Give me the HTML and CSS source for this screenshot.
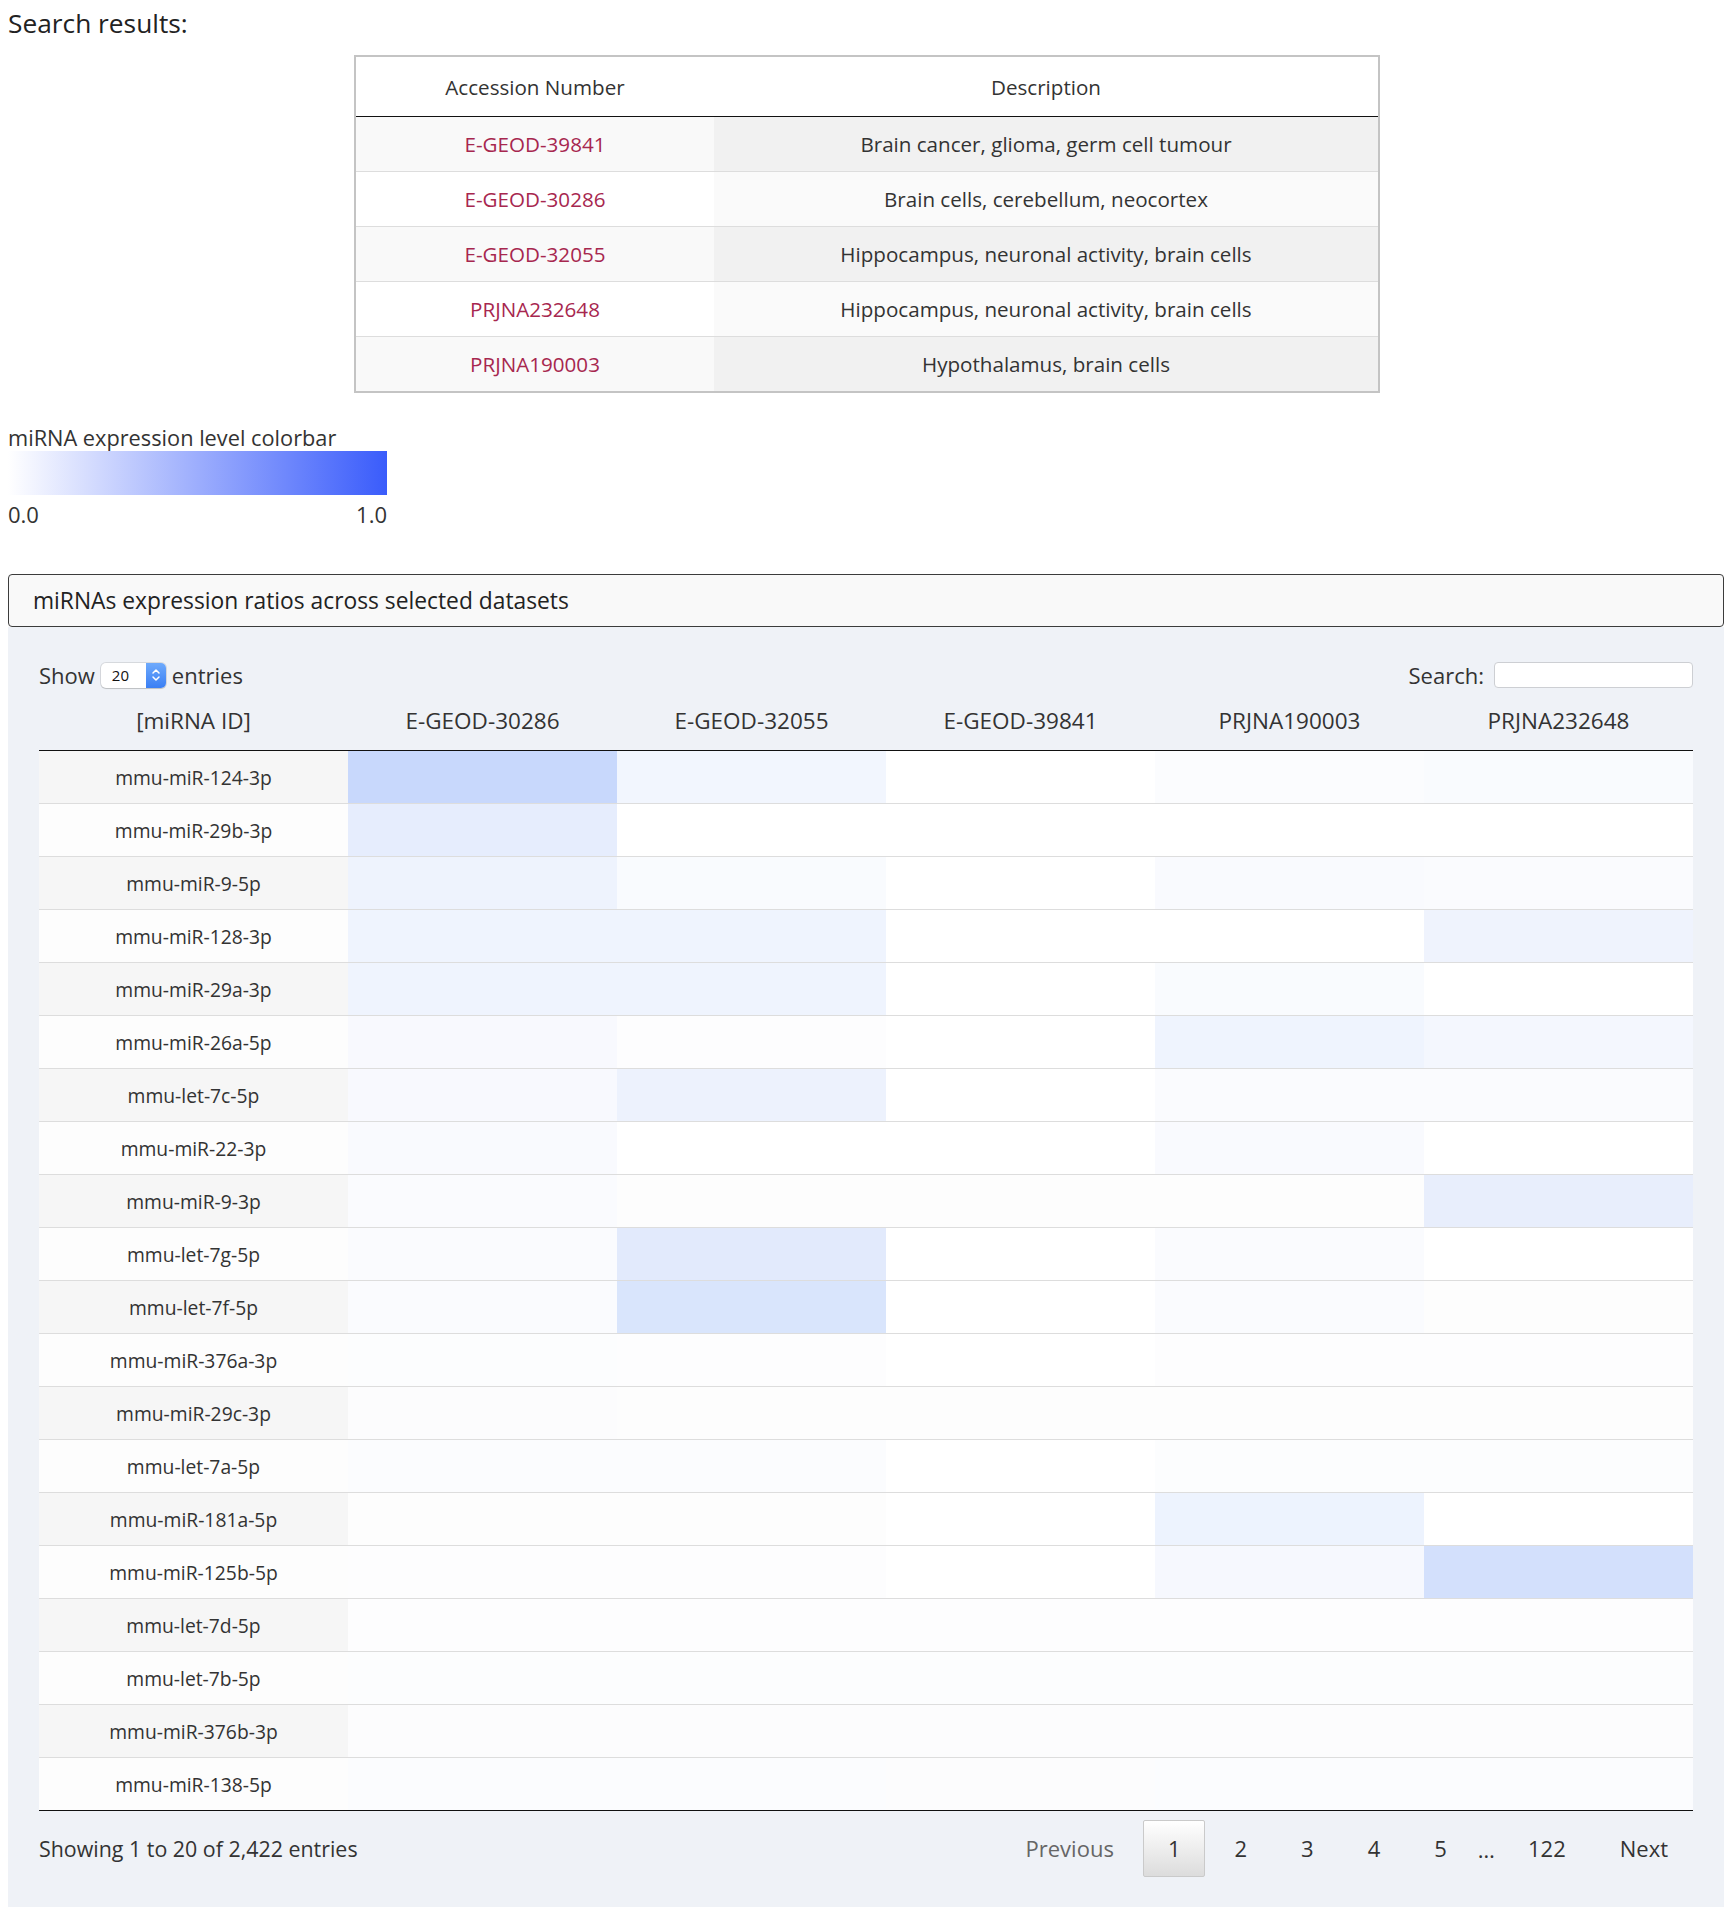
FILE: index.html
```html
<!DOCTYPE html>
<html>
<head>
<meta charset="utf-8">
<title>Search results</title>
<link rel="stylesheet" href="styles.css">
</head>
<body>
<h3 class="page-title">Search results:</h3>

<table class="results">
  <thead>
    <tr><th class="col-acc">Accession Number</th><th>Description</th></tr>
  </thead>
  <tbody>
    <tr class="odd"><td class="acc"><a href="#">E-GEOD-39841</a></td><td class="desc">Brain cancer, glioma, germ cell tumour</td></tr>
    <tr class="even"><td class="acc"><a href="#">E-GEOD-30286</a></td><td class="desc">Brain cells, cerebellum, neocortex</td></tr>
    <tr class="odd"><td class="acc"><a href="#">E-GEOD-32055</a></td><td class="desc">Hippocampus, neuronal activity, brain cells</td></tr>
    <tr class="even"><td class="acc"><a href="#">PRJNA232648</a></td><td class="desc">Hippocampus, neuronal activity, brain cells</td></tr>
    <tr class="odd"><td class="acc"><a href="#">PRJNA190003</a></td><td class="desc">Hypothalamus, brain cells</td></tr>
  </tbody>
</table>

<div class="colorbar">
  <div class="colorbar-label">miRNA expression level colorbar</div>
  <div class="colorbar-bar"></div>
  <div class="colorbar-scale"><span>0.0</span><span>1.0</span></div>
</div>

<section class="panel">
  <div class="panel-heading">miRNAs expression ratios across selected datasets</div>
  <div class="panel-body">
    <div class="dt-top">
      <div class="dt-length">
        <span>Show</span>
        <span class="select"><span class="select-val">20</span><span class="select-arrow"><svg width="10" height="16" viewBox="0 0 10 16"><path d="M2 6 L5 3 L8 6 M2 10 L5 13 L8 10" fill="none" stroke="#fff" stroke-width="1.5" stroke-linecap="round" stroke-linejoin="round"/></svg></span></span>
        <span>entries</span>
      </div>
      <div class="dt-search">
        <span>Search:</span>
        <span class="search-input"></span>
      </div>
    </div>

    <table class="heat">
      <colgroup><col class="c-id"><col><col><col><col><col></colgroup>
      <thead>
        <tr><th>[miRNA ID]</th><th>E-GEOD-30286</th><th>E-GEOD-32055</th><th>E-GEOD-39841</th><th>PRJNA190003</th><th>PRJNA232648</th></tr>
      </thead>
      <tbody>
        <tr class="odd"><td class="id">mmu-miR-124-3p</td><td style="background:#c8d8fc"></td><td style="background:#f2f6fe"></td><td style="background:#ffffff"></td><td style="background:#fbfcfe"></td><td style="background:#f9fbfe"></td></tr>
        <tr class="even"><td class="id">mmu-miR-29b-3p</td><td style="background:#e6edfd"></td><td style="background:#ffffff"></td><td style="background:#ffffff"></td><td style="background:#ffffff"></td><td style="background:#ffffff"></td></tr>
        <tr class="odd"><td class="id">mmu-miR-9-5p</td><td style="background:#eef3fd"></td><td style="background:#f9fbfe"></td><td style="background:#ffffff"></td><td style="background:#f9fafe"></td><td style="background:#fafbfe"></td></tr>
        <tr class="even"><td class="id">mmu-miR-128-3p</td><td style="background:#eff4fe"></td><td style="background:#eff4fe"></td><td style="background:#ffffff"></td><td style="background:#ffffff"></td><td style="background:#eff3fd"></td></tr>
        <tr class="odd"><td class="id">mmu-miR-29a-3p</td><td style="background:#eff4fe"></td><td style="background:#eff4fe"></td><td style="background:#ffffff"></td><td style="background:#f9fbfe"></td><td style="background:#ffffff"></td></tr>
        <tr class="even"><td class="id">mmu-miR-26a-5p</td><td style="background:#f8f9fe"></td><td style="background:#fdfdfe"></td><td style="background:#ffffff"></td><td style="background:#eff4fe"></td><td style="background:#f4f7fe"></td></tr>
        <tr class="odd"><td class="id">mmu-let-7c-5p</td><td style="background:#f8f9fe"></td><td style="background:#edf2fd"></td><td style="background:#ffffff"></td><td style="background:#fafbfe"></td><td style="background:#fafbfe"></td></tr>
        <tr class="even"><td class="id">mmu-miR-22-3p</td><td style="background:#f9fafe"></td><td style="background:#ffffff"></td><td style="background:#ffffff"></td><td style="background:#f9fafe"></td><td style="background:#ffffff"></td></tr>
        <tr class="odd"><td class="id">mmu-miR-9-3p</td><td style="background:#fafbfe"></td><td style="background:#fdfdfd"></td><td style="background:#fdfdfd"></td><td style="background:#fdfdfd"></td><td style="background:#e8eefc"></td></tr>
        <tr class="even"><td class="id">mmu-let-7g-5p</td><td style="background:#fafbfe"></td><td style="background:#e2eafc"></td><td style="background:#ffffff"></td><td style="background:#fafbfe"></td><td style="background:#ffffff"></td></tr>
        <tr class="odd"><td class="id">mmu-let-7f-5p</td><td style="background:#fafbfe"></td><td style="background:#d9e5fc"></td><td style="background:#ffffff"></td><td style="background:#fafbfe"></td><td style="background:#fdfdfd"></td></tr>
        <tr class="even"><td class="id">mmu-miR-376a-3p</td><td style="background:#fcfdfe"></td><td style="background:#fdfdfe"></td><td style="background:#ffffff"></td><td style="background:#fdfdfe"></td><td style="background:#fdfdfe"></td></tr>
        <tr class="odd"><td class="id">mmu-miR-29c-3p</td><td style="background:#fcfcfd"></td><td style="background:#fdfdfd"></td><td style="background:#fdfdfd"></td><td style="background:#fdfdfd"></td><td style="background:#fdfdfd"></td></tr>
        <tr class="even"><td class="id">mmu-let-7a-5p</td><td style="background:#fbfcfe"></td><td style="background:#fbfcfe"></td><td style="background:#ffffff"></td><td style="background:#fcfdfe"></td><td style="background:#fcfdfe"></td></tr>
        <tr class="odd"><td class="id">mmu-miR-181a-5p</td><td style="background:#fdfdfd"></td><td style="background:#fdfdfd"></td><td style="background:#ffffff"></td><td style="background:#edf3fe"></td><td style="background:#ffffff"></td></tr>
        <tr class="even"><td class="id">mmu-miR-125b-5p</td><td style="background:#fdfdfe"></td><td style="background:#fdfdfe"></td><td style="background:#ffffff"></td><td style="background:#f6f8fe"></td><td style="background:#d3e0fc"></td></tr>
        <tr class="odd"><td class="id">mmu-let-7d-5p</td><td style="background:#fdfdfe"></td><td style="background:#fdfdfe"></td><td style="background:#fdfdfe"></td><td style="background:#fdfdfe"></td><td style="background:#fdfdfe"></td></tr>
        <tr class="even"><td class="id">mmu-let-7b-5p</td><td style="background:#fcfdfe"></td><td style="background:#fcfdfe"></td><td style="background:#fcfdfe"></td><td style="background:#fcfdfe"></td><td style="background:#fcfdfe"></td></tr>
        <tr class="odd"><td class="id">mmu-miR-376b-3p</td><td style="background:#fcfcfd"></td><td style="background:#fcfcfd"></td><td style="background:#fcfcfd"></td><td style="background:#fcfcfd"></td><td style="background:#fcfcfd"></td></tr>
        <tr class="even"><td class="id">mmu-miR-138-5p</td><td style="background:#fbfcfe"></td><td style="background:#fbfcfe"></td><td style="background:#fcfcfd"></td><td style="background:#fbfcfe"></td><td style="background:#fbfcfe"></td></tr>
      </tbody>
    </table>

    <div class="dt-bottom">
      <div class="dt-info">Showing 1 to 20 of 2,422 entries</div>
      <div class="pager">
        <span class="pg disabled">Previous</span>
        <span class="pg current">1</span>
        <span class="pg">2</span>
        <span class="pg">3</span>
        <span class="pg">4</span>
        <span class="pg">5</span>
        <span class="ellipsis">…</span>
        <span class="pg">122</span>
        <span class="pg">Next</span>
      </div>
    </div>
  </div>
</section>
</body>
</html>
```

FILE: styles.css
```css
html {
  overflow: hidden;
}

body {
  margin: 8px 8px 0;
  font-family: "Open Sans", "Noto Sans", sans-serif;
  color: #333;
  background: #fff;
}

.page-title {
  margin: 0;
  font-size: 26.3px;
  line-height: 30px;
  font-weight: normal;
  color: #222;
}

/* ---------- search results table ---------- */
.results {
  width: 1026px;
  margin: 17px auto 0;
  border: 2px solid #c4c4c4;
  border-spacing: 0;
  font-size: 20.6px;
  color: #333;
}

.results th {
  font-weight: normal;
  padding: 17px 0 16px;
  line-height: 26px;
  border-bottom: 1px solid #111;
  background: #fff;
}

.results .col-acc {
  width: 358px;
}

.results td {
  padding: 14px 0;
  line-height: 26px;
  text-align: center;
  border-top: 1px solid #ddd;
}

.results tbody tr:first-child td {
  border-top: 0;
}

.results tr.odd td {
  background: #f9f9f9;
}

.results tr.odd td.desc {
  background: #f1f1f1;
}

.results tr.even td {
  background: #fff;
}

.results tr.even td.desc {
  background: #fafafa;
}

.results a {
  color: #a7274f;
  text-decoration: none;
}

/* ---------- colorbar ---------- */
.colorbar {
  margin-top: 31px;
  width: 379px;
}

.colorbar-label {
  font-size: 21.75px;
  line-height: 27px;
}

.colorbar-bar {
  height: 44px;
  background: linear-gradient(to right, #ffffff, #3a5cfb);
}

.colorbar-scale {
  display: flex;
  justify-content: space-between;
  margin-top: 5px;
  font-size: 22px;
  line-height: 28px;
}

/* ---------- panel ---------- */
.panel {
  margin-top: 46px;
  margin-right: 2px;
}

.panel-heading {
  padding: 12px 24px;
  font-size: 22.8px;
  line-height: 27px;
  color: #222;
  background: #f9f9f9;
  border: 1px solid #3c3c3c;
  border-radius: 4px;
}

.panel-body {
  background: #eff2f7;
  padding: 34px 31px 30px;
  font-size: 22px;
}

.dt-top {
  display: flex;
  justify-content: space-between;
  align-items: center;
  height: 28px;
  line-height: 28px;
}

.dt-length {
  display: flex;
  align-items: center;
  gap: 6px;
}

.select {
  display: flex;
  width: 65px;
  height: 25px;
  background: #fff;
  border-radius: 5px;
  box-shadow: 0 0 0 1px rgba(0, 0, 0, 0.1), 0 1px 1px rgba(0, 0, 0, 0.12);
  overflow: hidden;
}

.select-val {
  flex: 1;
  padding-left: 11px;
  font-size: 15px;
  line-height: 25px;
  color: #111;
}

.select-arrow {
  width: 20px;
  display: flex;
  align-items: center;
  justify-content: center;
  background: linear-gradient(#6eaafc, #3a7ff4);
}

.dt-search {
  display: flex;
  align-items: center;
  gap: 10px;
}

.search-input {
  width: 197px;
  height: 24px;
  background: #fff;
  border: 1px solid #cdcfd3;
  border-radius: 4px;
}

/* ---------- heat table ---------- */
.heat {
  width: 100%;
  margin-top: 4px;
  border-spacing: 0;
  table-layout: fixed;
  border-bottom: 1px solid #111;
}

.heat .c-id {
  width: 309px;
}

.heat th {
  font-weight: normal;
  font-size: 22.5px;
  line-height: 28px;
  padding: 14px 0 15px;
  border-bottom: 1px solid #111;
  text-align: center;
  color: #333;
}

.heat td {
  font-size: 19.3px;
  line-height: 24px;
  padding: 15px 0 13px;
  border-top: 1px solid #ddd;
  text-align: center;
  background: #fff;
}

.heat tbody tr:first-child td {
  border-top: 0;
}

.heat tr.odd td.id {
  background: #f6f6f6;
}

.heat tr.even td.id {
  background: #fdfdfd;
}

/* ---------- footer ---------- */
.dt-bottom {
  display: flex;
  justify-content: space-between;
  align-items: center;
  margin-top: 9px;
}

.dt-info {
  font-size: 21.4px;
}

.pager {
  display: flex;
  align-items: center;
}

.pg {
  padding: 12px 24px;
  line-height: 31px;
  margin-left: 4px;
  border: 1px solid transparent;
  border-radius: 2px;
  color: #333;
}

.pg.current {
  border-color: #cacaca;
  background: linear-gradient(#ffffff, #dcdcdc);
}

.pg.disabled {
  color: #666;
}

.ellipsis {
  padding: 0 4px 0 6px;
  color: #333;
}
```
